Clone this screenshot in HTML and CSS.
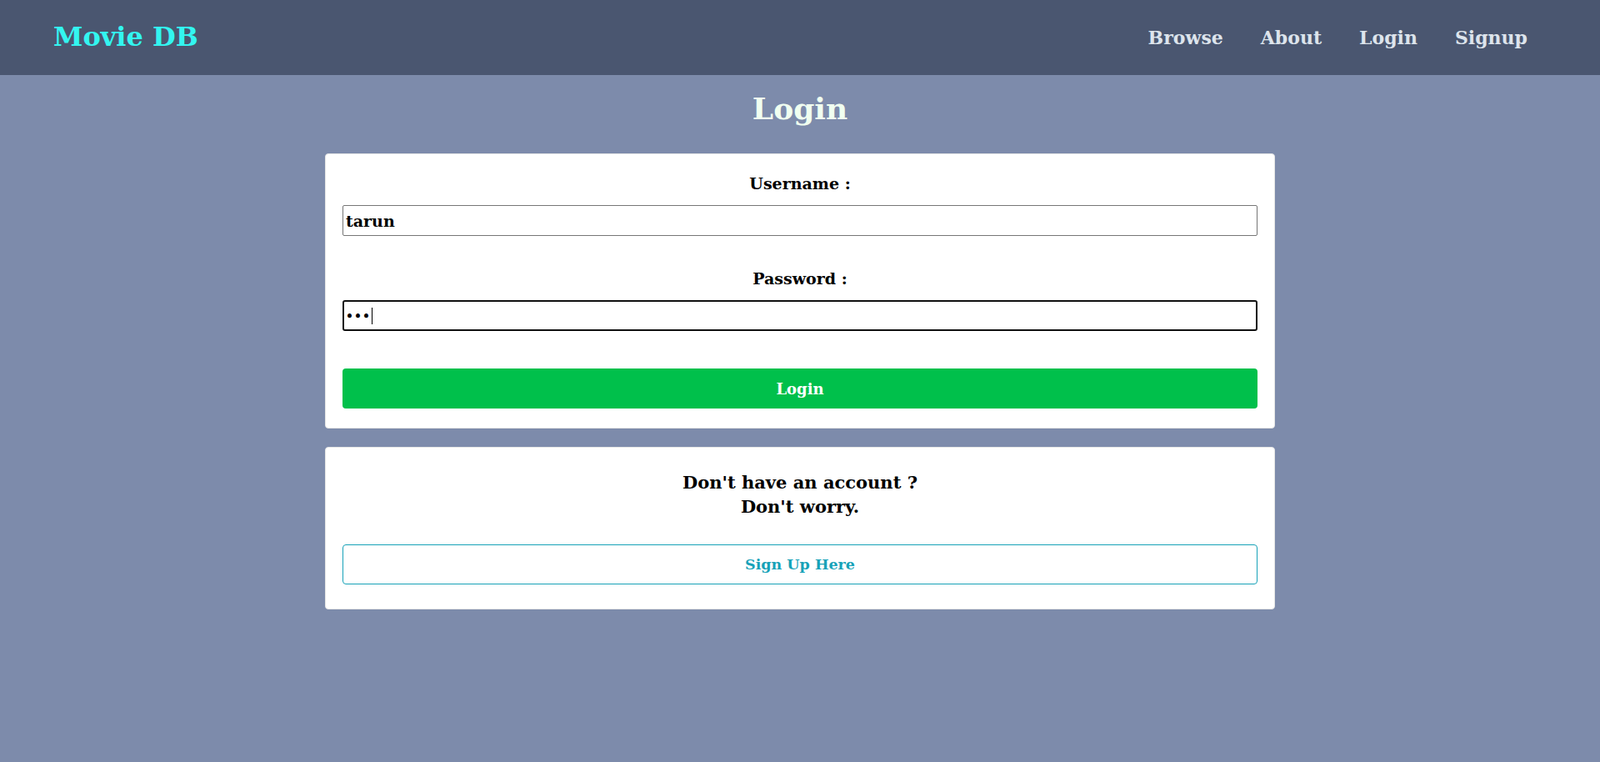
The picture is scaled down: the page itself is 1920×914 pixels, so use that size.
FILE: index.html
```html
<!DOCTYPE html>
<html lang="en">
<head>
<meta charset="utf-8">
<title>Movie DB - Login</title>
<link rel="stylesheet" href="styles.css">
</head>
<body>
<nav class="navbar">
  <a class="brand" href="#">Movie DB</a>
  <ul class="nav-links">
    <li><a href="#">Browse</a></li>
    <li><a href="#">About</a></li>
    <li><a href="#">Login</a></li>
    <li><a href="#">Signup</a></li>
  </ul>
</nav>
<main class="page">
  <h1 class="title">Login</h1>
  <section class="card login-card">
    <form class="login-form">
      <div class="field">
        <label class="field-label" for="username">Username :</label>
        <input class="field-input" id="username" type="text" value="tarun">
      </div>
      <div class="field">
        <label class="field-label" for="password">Password :</label>
        <div class="field-input focused"><span class="dots">&#8226;&#8226;&#8226;</span><span class="caret"></span></div>
      </div>
      <button class="btn btn-login" type="button">Login</button>
    </form>
  </section>
  <section class="card signup-card">
    <p class="signup-text">Don't have an account ?<br>Don't worry.</p>
    <a class="btn btn-signup" href="#">Sign Up Here</a>
  </section>
</main>
</body>
</html>
```
FILE: styles.css
```css
* { box-sizing: border-box; }
html, body { margin: 0; padding: 0; }
body {
  background: #7d8bab;
  font-family: "DejaVu Serif", "Liberation Serif", serif;
  min-height: 914px;
  color: #000;
}
.navbar {
  height: 90px;
  background: #4a5670;
  display: flex;
  align-items: center;
  justify-content: space-between;
  padding: 0 87px 0 64px;
}
.brand {
  color: #33f5f0;
  text-decoration: none;
  font-size: 32px;
  font-weight: bold;
  line-height: 1;
  margin-top: -2px;
}
.nav-links {
  list-style: none;
  margin: 0;
  padding: 0;
  display: flex;
  gap: 45px;
}
.nav-links a {
  color: #dde4ec;
  text-decoration: none;
  font-size: 22px;
  font-weight: bold;
}
.page {
  width: 1140px;
  margin: 0 auto;
  padding-top: 16px;
}
.title {
  margin: 0 0 30px;
  text-align: center;
  font-weight: bold;
  font-size: 36px;
  line-height: 48px;
  color: #f0fff0;
}
.card {
  background: #fff;
  border: 1px solid #e6e6e6;
  border-radius: 4px;
}
.login-card {
  padding: 20px 20px 23px;
}
.field {
  margin-bottom: 36px;
}
.field + .field { margin-bottom: 45px; }
.field-label {
  display: block;
  text-align: center;
  font-weight: bold;
  font-size: 19px;
  line-height: 30px;
  margin-bottom: 11px;
}
.field-input {
  display: flex;
  align-items: center;
  width: 100%;
  height: 37px;
  border: 1px solid #767676;
  border-radius: 2px;
  padding: 0 3px;
  font-family: inherit;
  font-size: 19px;
  font-weight: bold;
  color: #000;
  background: #fff;
}
.focused {
  border: 2px solid #101010;
  border-radius: 3px;
  padding: 0 2px;
}
.dots {
  font-size: 14px;
  letter-spacing: 1px;
}
.caret {
  width: 1px;
  height: 20px;
  background: #000;
  margin-left: 1px;
}
.btn {
  display: flex;
  align-items: center;
  justify-content: center;
  width: 100%;
  height: 48px;
  border-radius: 4px;
  font-family: inherit;
  font-size: 17.5px;
  font-weight: bold;
  text-decoration: none;
}
.btn-login {
  background: #00c04b;
  color: #fff;
  border: none;
  font-size: 18px;
}
.signup-card {
  margin-top: 22px;
  padding: 27px 20px 29px;
}
.signup-text {
  margin: 0 0 31px;
  text-align: center;
  font-weight: bold;
  font-size: 21px;
  line-height: 29px;
}
.btn-signup {
  border: 1px solid #17a2b8;
  color: #17a2b8;
  background: #fff;
}
```
